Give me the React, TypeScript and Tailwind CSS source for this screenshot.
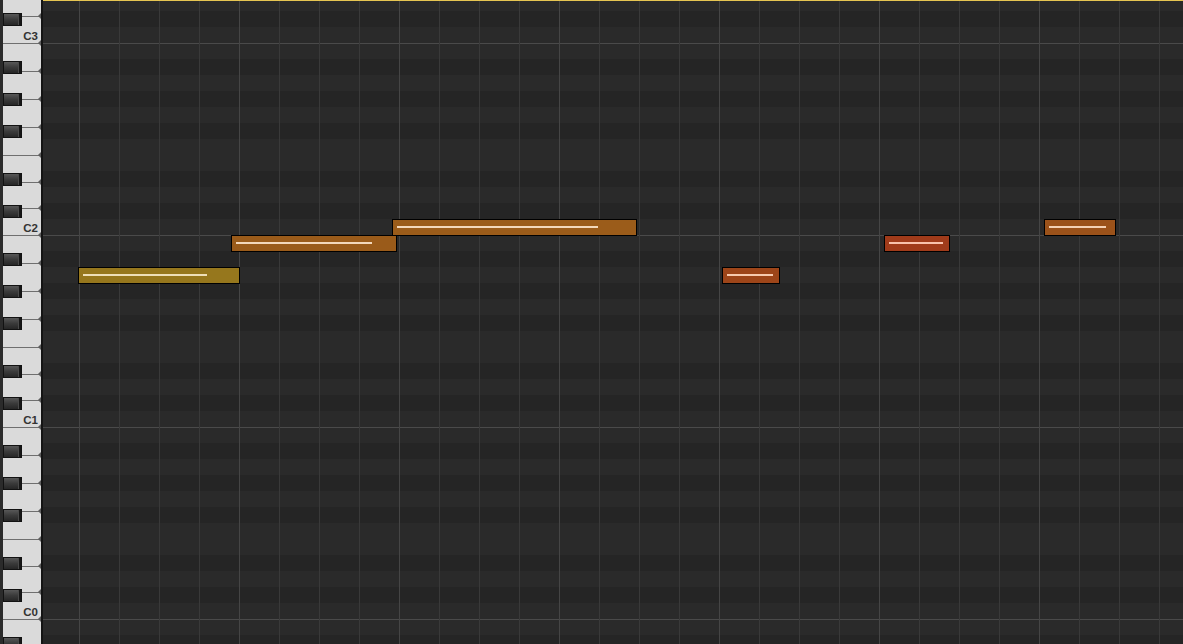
import React from "react";

const NAMES = ["C", "C#", "D", "D#", "E", "F", "F#", "G", "G#", "A", "A#", "B"];
const BLACK = [1, 3, 6, 8, 10];
const mod12 = (p: number) => ((p % 12) + 12) % 12;

const whiteHeights: Record<string, string> = {
  C: "h-[27px]",
  D: "h-[26px]",
  E: "h-[27px]",
  F: "h-[28px]",
  G: "h-[28px]",
  A: "h-[28px]",
  B: "h-[28px]",
};

type WKey = { name: string; octave: number };
const whiteKeys: WKey[] = (() => {
  const keys: WKey[] = [];
  let p = 50; // D3
  while (keys.length < 24) {
    const m = mod12(p);
    if (!BLACK.includes(m)) {
      keys.push({ name: NAMES[m], octave: Math.floor(p / 12) - 1 });
    }
    p--;
  }
  return keys;
})();

const rowPitches = Array.from({ length: 42 }, (_, i) => 50 - i);

const notes = [
  { cls: "left-[35px] top-[267px] w-[162px] bg-[#96771d]", line: "w-[124px] bg-[#eedfb8]" },
  { cls: "left-[188px] top-[235px] w-[166px] bg-[#9a5b1a]", line: "w-[136px] bg-[#f3d8bb]" },
  { cls: "left-[349px] top-[219px] w-[245px] bg-[#9b5c1a]", line: "w-[201px] bg-[#f3d8bb]" },
  { cls: "left-[679px] top-[267px] w-[58px] bg-[#9d4519]", line: "w-[46px] bg-[#f7caae]" },
  { cls: "left-[841px] top-[235px] w-[66px] bg-[#a03b1a]", line: "w-[54px] bg-[#f8c2ac]" },
  { cls: "left-[1001px] top-[219px] w-[72px] bg-[#9b521a]", line: "w-[57px] bg-[#f4d1b4]" },
];

function Keyboard() {
  return (
    <div className="flex h-full w-[43px] shrink-0 border-r-2 border-[#141414]">
      <div className="w-[3px] shrink-0 bg-[#2b2b2b]" />
      <div className="relative flex-1 overflow-hidden bg-[#dadada]">
        <div className="-mt-[9px] flex flex-col">
          {whiteKeys.map((k, i) => (
            <div
              key={i}
              className={`relative flex shrink-0 items-end justify-end border-b border-[#6f6f6f] pb-[1px] pr-[3px] ${whiteHeights[k.name]}`}
            >
              {k.name === "C" && (
                <span className="font-['Liberation_Sans',Arial,sans-serif] text-[11.5px] font-bold leading-none text-[#333333]">
                  C{k.octave}
                </span>
              )}
              <span className="absolute -bottom-[3px] right-0 h-0 w-0 border-y-[3px] border-r-[3px] border-y-transparent border-r-[#5e5e5e]" />
            </div>
          ))}
        </div>
        <div className="absolute inset-0 -mt-[5px] flex flex-col">
          {rowPitches.map((p, i) => (
            <div key={i} className="h-4 shrink-0">
              {BLACK.includes(mod12(p)) && (
                <div className="mt-[2px] flex h-[13px] w-[19px] border border-[#121212]">
                  <div className="flex-1 bg-gradient-to-b from-[#585858] via-[#3a3a3a] to-[#262626]" />
                  <div className="w-[3px] border-l border-[#4a4a4a] bg-[#161616]" />
                </div>
              )}
            </div>
          ))}
        </div>
      </div>
    </div>
  );
}

function Grid() {
  return (
    <div className="relative h-full flex-1 overflow-hidden bg-[#282828]">
      <div className="-mt-[5px] flex flex-col">
        {rowPitches.map((p, i) => {
          const m = mod12(p);
          const black = BLACK.includes(m);
          return (
            <div
              key={i}
              className={`h-4 shrink-0 ${black ? "bg-[#252525]" : "bg-[#2a2a2a]"} ${
                m === 11 ? "shadow-[inset_0_1px_0_#4a4a4a]" : ""
              }`}
            />
          );
        })}
      </div>
      <div className="absolute inset-0 flex">
        <div className="w-[36px] shrink-0" />
        {Array.from({ length: 29 }, (_, k) => (
          <div
            key={k}
            className={`h-full w-[40px] shrink-0 border-l ${k % 4 === 0 ? "border-[#454545]" : "border-[#393939]"}`}
          />
        ))}
      </div>
      <div className="absolute left-0 right-0 top-0 h-px bg-[#e6c552]" />
      {notes.map((n, i) => (
        <div key={i} className={`absolute h-[17px] border border-black pl-[4px] pt-[6px] ${n.cls}`}>
          <div className={`h-[2px] ${n.line}`} />
        </div>
      ))}
    </div>
  );
}

export default function App() {
  return (
    <div className="flex h-[644px] w-[1183px] overflow-hidden bg-[#282828]">
      <Keyboard />
      <Grid />
    </div>
  );
}
